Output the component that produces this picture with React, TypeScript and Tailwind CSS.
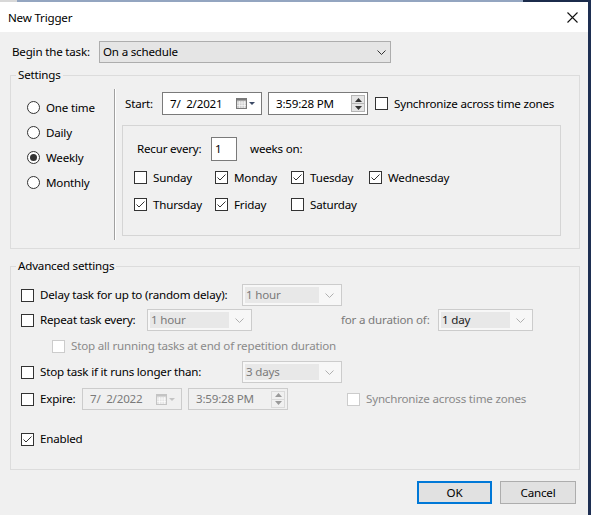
import React from "react";

const Check = ({ checked = false, disabled = false }: { checked?: boolean; disabled?: boolean }) => (
  <span
    className={`w-[13px] h-[13px] shrink-0 border bg-white flex items-center justify-center ${
      disabled ? "border-[#cccccc]" : "border-[#333333]"
    }`}
  >
    {checked && (
      <svg width="11" height="11" viewBox="0 0 11 11">
        <path d="M1.5 5.5 L4 8 L9.5 2.5" fill="none" stroke="#333333" strokeWidth="1" />
      </svg>
    )}
  </span>
);

const Radio = ({ checked = false }: { checked?: boolean }) => (
  <span className="w-[13px] h-[13px] shrink-0 rounded-full border border-[#333333] bg-white flex items-center justify-center">
    {checked && <span className="w-[7px] h-[7px] rounded-full bg-[#333333]" />}
  </span>
);

const Chevron = ({ color = "#333333" }: { color?: string }) => (
  <svg width="9" height="5" viewBox="0 0 9 5">
    <path d="M0.5 0.5 L4.5 4.5 L8.5 0.5" fill="none" stroke={color} strokeWidth="1" />
  </svg>
);

const CalIcon = ({ disabled = false }: { disabled?: boolean }) => {
  const o = disabled ? "#c4c4c4" : "#7a7a7a";
  const f = disabled ? "#e6e6e6" : "#cfcfcf";
  const t = disabled ? "#c4c4c4" : "#3c4a66";
  return (
    <svg width="20" height="11" viewBox="0 0 20 11">
      <rect x="0.5" y="0.5" width="10" height="10" fill={f} stroke={o} />
      <rect x="0.5" y="0.5" width="10" height="2" fill={o} />
      <path d="M3.5 3 V10 M6 3 V10 M8.5 3 V10 M1 5 H10 M1 7.5 H10" stroke="#ffffff" strokeWidth="0.6" />
      <path d="M13 4 L19 4 L16 7 Z" fill={t} />
    </svg>
  );
};

const Spin = ({ disabled = false }: { disabled?: boolean }) => {
  const c = disabled ? "#9a9a9a" : "#333333";
  return (
    <div className={`w-[14px] h-[17px] flex flex-col border ${disabled ? "border-[#dadada]" : "border-[#b5b5b5]"}`}>
      <div className={`flex-1 flex items-center justify-center border-b ${disabled ? "border-[#dadada] bg-[#f0f0f0]" : "border-[#b5b5b5] bg-[#e5e5e5]"}`}>
        <svg width="7" height="4" viewBox="0 0 7 4"><path d="M0 4 L3.5 0 L7 4 Z" fill={c} /></svg>
      </div>
      <div className={`flex-1 flex items-center justify-center ${disabled ? "bg-[#f0f0f0]" : "bg-[#e5e5e5]"}`}>
        <svg width="7" height="4" viewBox="0 0 7 4"><path d="M0 0 L3.5 4 L7 0 Z" fill={c} /></svg>
      </div>
    </div>
  );
};

const DisabledSelect = ({ cls, text, dark = false }: { cls: string; text: string; dark?: boolean }) => (
  <div className={`${cls} h-[22px] border border-[#cccccc] bg-[#f7f7f7] flex items-center p-[2px]`}>
    <div className={`flex-1 h-full bg-[#e8e8e8] flex items-center pl-[1px] ${dark ? "text-[#222222]" : "text-[#7a7a7a]"}`}>
      {text}
    </div>
    <div className="w-[20px] flex items-center justify-center">
      <Chevron color="#b0b0b0" />
    </div>
  </div>
);

export default function App() {
  return (
    <div className="w-[591px] h-[515px] flex font-['Noto_Sans',sans-serif] text-[11.6px] tracking-[-0.2px] leading-[16px] text-black overflow-hidden">
      <div className="w-[588px] flex flex-col">
        {/* top strip */}
        <div className="h-[2px] flex">
          <div className="w-[17px] bg-[#d8d8d8]" />
          <div className="flex-1 bg-[#93a5c0]" />
          <div className="w-[65px] bg-[#1b2b4b]" />
        </div>
        {/* title bar */}
        <div className="h-[30px] bg-white flex items-center justify-between pl-[8px] pr-[10px]">
          <span className="pt-[1px]">New Trigger</span>
          <svg width="11" height="11" viewBox="0 0 11 11">
            <path d="M0.5 0.5 L10.5 10.5 M10.5 0.5 L0.5 10.5" stroke="#111111" strokeWidth="1.1" />
          </svg>
        </div>
        {/* body */}
        <div className="flex-1 bg-[#f0f0f0] flex flex-col">
          <div className="flex items-center mt-[9px] h-[22px]">
            <span className="ml-[12px] w-[87px]">Begin the task:</span>
            <div className="w-[292px] h-[22px] bg-[#e5e5e5] border border-[#adadad] flex items-center justify-between pl-[3px] pr-[4px]">
              <span>On a schedule</span>
              <Chevron />
            </div>
          </div>

          {/* Settings */}
          <fieldset className="ml-[10px] w-[570px] h-[182px] mt-[4px] border border-[#dcdcdc]">
            <legend className="ml-[5px] px-[2px] leading-[16px]">Settings</legend>
            <div className="flex items-start">
              <div className="w-[103px] mt-[12px] flex flex-col">
                {[
                  ["One time", false],
                  ["Daily", false],
                  ["Weekly", true],
                  ["Monthly", false],
                ].map(([label, checked]) => (
                  <div key={label as string} className="h-[25px] flex items-center pl-[16px] gap-[6px]">
                    <Radio checked={checked as boolean} />
                    <span>{label as string}</span>
                  </div>
                ))}
              </div>
              <div className="mt-[6px] h-[151px] w-[2px] border-l border-[#a0a0a0] border-r border-r-white" />
              <div className="ml-[6px] mt-[9px] flex flex-col">
                <div className="h-[23px] flex items-center">
                  <span className="pl-[3px] w-[40px]">Start:</span>
                  <div className="w-[100px] h-[23px] bg-white border border-[#7a7a7a] flex items-center justify-between pl-[7px] pr-[5px]">
                    <span>7/&nbsp;&nbsp;2/2021</span>
                    <CalIcon />
                  </div>
                  <div className="ml-[6px] w-[100px] h-[23px] bg-white border border-[#7a7a7a] flex items-center justify-between pl-[7px] pr-[2px]">
                    <span>3:59:28 PM</span>
                    <Spin />
                  </div>
                  <span className="ml-[7px]">
                    <Check />
                  </span>
                  <span className="ml-[6px]">Synchronize across time zones</span>
                </div>
                <div className="mt-[10px] w-[439px] h-[111px] border border-[#d5d5d5] flex flex-col">
                  <div className="mt-[11px] h-[24px] flex items-center pl-[14px]">
                    <span className="w-[74px]">Recur every:</span>
                    <div className="w-[26px] h-[24px] bg-white border border-[#7a7a7a] flex items-center pl-[3px]">1</div>
                    <span className="ml-[13px]">weeks on:</span>
                  </div>
                  <div className="mt-[3px] h-[27px] flex items-center pl-[11px]">
                    <div className="w-[81px] flex items-center gap-[6px]"><Check /><span>Sunday</span></div>
                    <div className="w-[76px] flex items-center gap-[6px]"><Check checked /><span>Monday</span></div>
                    <div className="w-[78px] flex items-center gap-[6px]"><Check checked /><span>Tuesday</span></div>
                    <div className="flex items-center gap-[6px]"><Check checked /><span>Wednesday</span></div>
                  </div>
                  <div className="h-[27px] flex items-center pl-[11px]">
                    <div className="w-[81px] flex items-center gap-[6px]"><Check checked /><span>Thursday</span></div>
                    <div className="w-[76px] flex items-center gap-[6px]"><Check checked /><span>Friday</span></div>
                    <div className="w-[78px] flex items-center gap-[6px]"><Check /><span>Saturday</span></div>
                  </div>
                </div>
              </div>
            </div>
          </fieldset>

          {/* Advanced settings */}
          <fieldset className="ml-[10px] w-[570px] h-[212px] mt-[9px] border border-[#dcdcdc]">
            <legend className="ml-[5px] px-[2px] leading-[16px]">Advanced settings</legend>
            <div className="flex flex-col pl-[10px]">
              <div className="mt-[10px] h-[22px] flex items-center">
                <Check />
                <span className="ml-[6px] w-[202px]">Delay task for up to (random delay):</span>
                <DisabledSelect cls="w-[100px]" text="1 hour" />
              </div>
              <div className="mt-[3px] h-[22px] flex items-center">
                <Check />
                <span className="ml-[6px] w-[107px]">Repeat task every:</span>
                <DisabledSelect cls="w-[105px]" text="1 hour" />
                <span className="ml-[89px] w-[97px] text-[#7a7a7a]">for a duration of:</span>
                <DisabledSelect cls="w-[95px]" text="1 day" dark />
              </div>
              <div className="mt-[4px] h-[22px] flex items-center pl-[31px]">
                <Check disabled />
                <span className="ml-[6px] text-[#8a8a8a]">Stop all running tasks at end of repetition duration</span>
              </div>
              <div className="mt-[4px] h-[22px] flex items-center">
                <Check />
                <span className="ml-[6px] w-[202px]">Stop task if it runs longer than:</span>
                <DisabledSelect cls="w-[100px]" text="3 days" />
              </div>
              <div className="mt-[5px] h-[22px] flex items-center">
                <Check />
                <span className="ml-[6px] w-[42px]">Expire:</span>
                <div className="w-[100px] h-[22px] border border-[#cccccc] flex items-center justify-between pl-[7px] pr-[5px] text-[#7a7a7a]">
                  <span>7/&nbsp;&nbsp;2/2022</span>
                  <CalIcon disabled />
                </div>
                <div className="ml-[6px] w-[100px] h-[22px] border border-[#cccccc] flex items-center justify-between pl-[7px] pr-[2px] text-[#7a7a7a]">
                  <span>3:59:28 PM</span>
                  <Spin disabled />
                </div>
                <span className="ml-[59px]">
                  <Check disabled />
                </span>
                <span className="ml-[6px] text-[#8a8a8a]">Synchronize across time zones</span>
              </div>
              <div className="mt-[18px] h-[22px] flex items-center">
                <Check checked />
                <span className="ml-[6px]">Enabled</span>
              </div>
            </div>
          </fieldset>

          <div className="mt-[11px] flex justify-end pr-[12px]">
            <button className="w-[75px] h-[23px] bg-[#e1e1e1] border-2 border-[#0078d7] flex items-center justify-center">OK</button>
            <button className="ml-[8px] w-[76px] h-[23px] bg-[#e1e1e1] border border-[#adadad] flex items-center justify-center">Cancel</button>
          </div>
        </div>
      </div>
      <div className="w-[3px] bg-[#1e2f52]" />
    </div>
  );
}
